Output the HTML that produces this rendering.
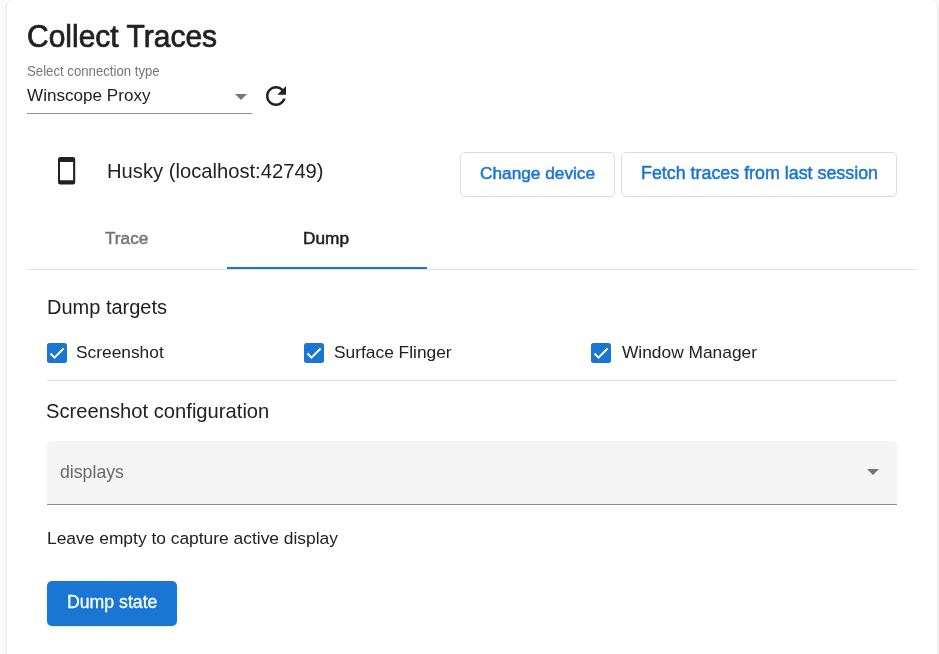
<!DOCTYPE html>
<html><head><meta charset="utf-8">
<style>
*{box-sizing:border-box;margin:0;padding:0}
html,body{width:939px;height:654px;overflow:hidden;background:#fafafa;font-family:"Liberation Sans",sans-serif;color:#212121}
.card{position:absolute;left:7px;top:-0.5px;width:930px;height:720px;background:#fff;border-radius:6px;box-shadow:0 2px 1px -1px rgba(0,0,0,.2),0 1px 1px 0 rgba(0,0,0,.14),0 1px 3px 0 rgba(0,0,0,.12)}
.t{position:absolute;white-space:nowrap;line-height:1;will-change:transform}
.med{-webkit-text-stroke:0.5px currentColor}
.arrow{position:absolute;width:0;height:0;border-left:6px solid transparent;border-right:6px solid transparent;border-top:6px solid #757575}
.btn{position:absolute;border:1.25px solid #dcdcdc;border-radius:5px}
.hr{position:absolute;height:1px;background:#e0e0e0}
.cb{position:absolute;width:20px;height:20px;background:#1976d2;border-radius:2.5px}
.cb svg{position:absolute;left:0;top:0}
</style></head><body>
<div class="card"></div>

<div class="t med" style="left:26.7px;top:22.2px;font-size:30px;-webkit-text-stroke:0.7px #212121;transform:scaleY(1.07);transform-origin:0 85%">Collect Traces</div>
<div class="t" style="left:27px;top:65px;font-size:13.2px;color:#777;transform:scaleY(1.1);transform-origin:0 85%">Select connection type</div>
<div class="t" style="left:27px;top:87px;font-size:17.1px;color:#212121">Winscope Proxy</div>
<div class="arrow" style="left:235px;top:94px"></div>
<div class="t" style="left:27px;top:112.8px;width:225px;height:1.25px;background:#8c8c8c"></div>
<svg class="t" style="left:261.3px;top:81px" width="30" height="30" viewBox="0 0 24 24"><path fill="#212121" d="M17.65 6.35C16.2 4.9 14.21 4 12 4c-4.42 0-7.99 3.58-7.99 8s3.57 8 7.99 8c3.73 0 6.84-2.55 7.73-6h-2.08c-.82 2.33-3.04 4-5.65 4-3.31 0-6-2.69-6-6s2.69-6 6-6c1.66 0 3.14.69 4.22 1.78L13 11h7V4l-2.35 2.35z"/></svg>

<svg class="t" style="left:50px;top:150px" width="30" height="40" viewBox="0 0 30 40"><path fill="#212121" fill-rule="evenodd" d="M10.5 7.1h12.2a2.5 2.5 0 0 1 2.5 2.5v22.3a2.5 2.5 0 0 1-2.5 2.5h-12.2a2.5 2.5 0 0 1-2.5-2.5v-22.3a2.5 2.5 0 0 1 2.5-2.5zM10 12v18.2h13.1v-18.2z"/></svg>
<div class="t" style="left:107px;top:161px;font-size:20.2px;color:#212121">Husky (localhost:42749)</div>

<div class="btn" style="left:460px;top:152px;width:155px;height:45px"></div>
<div class="t med" style="left:480px;top:164.6px;font-size:17.25px;color:#1976d2">Change device</div>
<div class="btn" style="left:621px;top:152px;width:276px;height:45px"></div>
<div class="t med" style="left:641px;top:165px;font-size:17.85px;color:#1976d2">Fetch traces from last session</div>

<div class="t med" style="left:105px;top:230px;font-size:17.2px;color:#757575">Trace</div>
<div class="t med" style="left:303px;top:230px;font-size:17.25px;color:#212121">Dump</div>
<div class="hr" style="left:27px;top:269px;width:890px;height:1px"></div>
<div class="t" style="left:227px;top:267px;width:200px;height:2px;background:#1976d2"></div>

<div class="t" style="left:47px;top:297px;font-size:20px;color:#212121">Dump targets</div>

<div class="cb" style="left:47px;top:343px"><svg width="20" height="20" viewBox="0 0 20 20"><path d="M3.5 10.5L7.5 14.6L16.6 5.5" fill="none" stroke="#fff" stroke-width="2"/></svg></div>
<div class="t" style="left:76px;top:344px;font-size:17.35px;color:#212121">Screenshot</div>
<div class="cb" style="left:304px;top:343px"><svg width="20" height="20" viewBox="0 0 20 20"><path d="M3.5 10.5L7.5 14.6L16.6 5.5" fill="none" stroke="#fff" stroke-width="2"/></svg></div>
<div class="t" style="left:334px;top:344px;font-size:17.35px;color:#212121">Surface Flinger</div>
<div class="cb" style="left:591px;top:343px"><svg width="20" height="20" viewBox="0 0 20 20"><path d="M3.5 10.5L7.5 14.6L16.6 5.5" fill="none" stroke="#fff" stroke-width="2"/></svg></div>
<div class="t" style="left:622.2px;top:344px;font-size:17.35px;color:#212121">Window Manager</div>
<div class="hr" style="left:47px;top:380px;width:850px;height:1px"></div>

<div class="t" style="left:46.4px;top:400.5px;font-size:20.2px;color:#212121">Screenshot configuration</div>

<div class="t" style="left:47px;top:441px;width:850px;height:64px;background:#f4f4f4;border-radius:5px 5px 0 0;border-bottom:1.25px solid #8c8c8c"></div>
<div class="t" style="left:60px;top:464px;font-size:17.7px;color:#6a6a6a">displays</div>
<div class="arrow" style="left:867px;top:469px"></div>

<div class="t" style="left:47px;top:530px;font-size:17.4px;color:#212121">Leave empty to capture active display</div>

<div class="t" style="left:47px;top:581px;width:130px;height:45px;background:#1976d2;border-radius:5px;box-shadow:0 1px 2px rgba(0,0,0,.12)"></div>
<div class="t med" style="left:66.6px;top:594px;font-size:17.7px;color:#fff;-webkit-text-stroke:0.3px #fff">Dump state</div>
</body></html>
